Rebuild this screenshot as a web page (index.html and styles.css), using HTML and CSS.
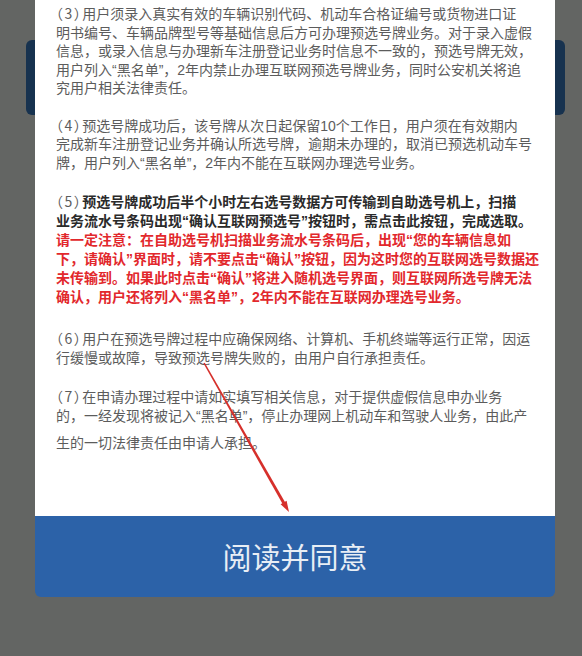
FILE: index.html
```html
<!DOCTYPE html>
<html lang="zh-CN">
<head>
<meta charset="utf-8">
<title>预选号牌须知</title>
<link rel="stylesheet" href="styles.css">
</head>
<body>
<div class="page">
  <div class="bg-bar"></div>
</div>
<div class="modal">
  <div class="modal-body">
    <p class="para">
      <span class="ln"><span class="num">（3）</span>用户须录入真实有效的车辆识别代码、机动车合格证编号或货物进口证</span>
      <span class="ln">明书编号、车辆品牌型号等基础信息后方可办理预选号牌业务。对于录入虚假</span>
      <span class="ln">信息，或录入信息与办理新车注册登记业务时信息不一致的，预选号牌无效，</span>
      <span class="ln">用户列入“黑名单”，2年内禁止办理互联网预选号牌业务，同时公安机关将追</span>
      <span class="ln">究用户相关法律责任。</span>
    </p>
    <p class="para para-4">
      <span class="ln"><span class="num">（4）</span>预选号牌成功后，该号牌从次日起保留10个工作日，用户须在有效期内</span>
      <span class="ln">完成新车注册登记业务并确认所选号牌，逾期未办理的，取消已预选机动车号</span>
      <span class="ln">牌，用户列入“黑名单”，2年内不能在互联网办理选号业务。</span>
    </p>
    <p class="para para-notice">
      <span class="ln"><span class="num">（5）</span><strong class="strong">预选号牌成功后半个小时左右选号数据方可传输到自助选号机上，扫描</strong></span>
      <span class="ln strong">业务流水号条码出现“确认互联网预选号”按钮时，需点击此按钮，完成选取。</span>
      <span class="ln warn">请一定注意：在自助选号机扫描业务流水号条码后，出现“您的车辆信息如</span>
      <span class="ln warn">下，请确认”界面时，请不要点击“确认”按钮，因为这时您的互联网选号数据还</span>
      <span class="ln warn">未传输到。如果此时点击“确认”将进入随机选号界面，则互联网所选号牌无法</span>
      <span class="ln warn">确认，用户还将列入“黑名单”，2年内不能在互联网办理选号业务。</span>
    </p>
    <p class="para">
      <span class="ln"><span class="num">（6）</span>用户在预选号牌过程中应确保网络、计算机、手机终端等运行正常，因运</span>
      <span class="ln">行缓慢或故障，导致预选号牌失败的，由用户自行承担责任。</span>
    </p>
    <p class="para">
      <span class="ln"><span class="num">（7）</span>在申请办理过程中请如实填写相关信息，对于提供虚假信息申办业务</span>
      <span class="ln">的，一经发现将被记入“黑名单”，停止办理网上机动车和驾驶人业务，由此产</span>
      <span class="ln ln-gap">生的一切法律责任由申请人承担。</span>
    </p>
  </div>
  <button class="agree" type="button">阅读并同意</button>
</div>
<svg class="arrow" width="582" height="656" viewBox="0 0 582 656" aria-hidden="true">
  <polygon points="203.4,363.3 204.8,362.7 285.8,503.6 283.2,505.0" fill="#d6302b"/>
  <polygon points="289,512 280.6,504.3 286.6,500.8" fill="#d6302b"/>
</svg>
</body>
</html>
```

FILE: styles.css
```css
html, body {
  margin: 0;
  padding: 0;
}

body {
  width: 582px;
  height: 656px;
  overflow: hidden;
  position: relative;
  background: #636563;
  font-family: "Noto Sans CJK SC", "Noto Sans", sans-serif;
}

.page {
  padding: 40px 0 0 26px;
}

.bg-bar {
  width: 539px;
  height: 75px;
  background: #17324f;
  border-radius: 6px;
}

.modal {
  position: absolute;
  left: 35px;
  top: 0;
  width: 520px;
}

.modal-body {
  background: #ffffff;
  height: 516px;
  box-sizing: border-box;
  padding: 4px 0 0 21px;
  overflow: hidden;
}

.para {
  margin: 0 0 20px 0;
  font-family: "Liberation Sans", "Noto Sans CJK SC", sans-serif;
  font-size: 14px;
  line-height: 18.5px;
  color: #5c5c5c;
}

.para:first-child {
  margin-bottom: 18px;
}

.para-4 {
  margin-bottom: 20px;
}

.para-notice {
  line-height: 19px;
  margin-bottom: 22px;
}

.ln {
  display: block;
  white-space: nowrap;
}

.ln-gap {
  margin-top: 9px;
}

.num {
  font-family: "Noto Sans CJK SC", sans-serif;
  font-feature-settings: "halt";
  letter-spacing: 1.5px;
}

.strong {
  font-weight: 700;
  color: #2a2a2a;
}

.warn {
  font-weight: 700;
  color: #e2282c;
}

.agree {
  display: block;
  width: 100%;
  height: 81px;
  margin: 0;
  padding: 0;
  border: none;
  border-radius: 0 0 6px 6px;
  background: #2c62a8;
  color: #e8eef5;
  font-family: "Noto Sans CJK SC", "Noto Sans", sans-serif;
  font-size: 29px;
  font-weight: 400;
  line-height: 81px;
  text-align: center;
}

.arrow {
  position: absolute;
  left: 0;
  top: 0;
  pointer-events: none;
}
```
